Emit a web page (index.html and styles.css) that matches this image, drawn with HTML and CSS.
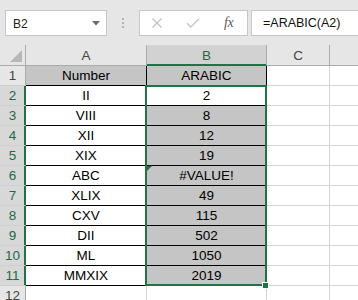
FILE: index.html
```html
<!DOCTYPE html>
<html>
<head>
<meta charset="utf-8">
<link rel="stylesheet" href="styles.css">
</head>
<body>
<div class="app">
  <div class="fbar">
    <div class="namebox"><span>B2</span>
      <svg class="dd" width="8" height="5" viewBox="0 0 8 5"><polygon points="0,0 8,0 4,4.5" fill="#6b6b6b"/></svg>
    </div>
    <div class="dots"><i></i><i></i><i></i></div>
    <div class="iconbox">
      <svg class="ico-x" width="12" height="10" viewBox="0 0 12 10"><path d="M1.5 0.5 L10.5 9.5 M10.5 0.5 L1.5 9.5" stroke="#c3c3c3" stroke-width="1.4" fill="none"/></svg>
      <svg class="ico-ok" width="14" height="10" viewBox="0 0 14 10"><path d="M1 5.2 L4.8 9 L13 0.8" stroke="#c8c8c8" stroke-width="1.5" fill="none"/></svg>
      <span class="fx">fx</span>
    </div>
    <div class="formula">=ARABIC(A2)</div>
  </div>
  <div class="sheet">
    <div class="grid">
      <div class="c hdr corner"><svg width="14" height="14" viewBox="0 0 14 14"><polygon points="13,1 13,13 1,13" fill="#b7b7b7"/></svg></div>
      <div class="c hdr">A</div>
      <div class="c hdr selcol">B</div>
      <div class="c hdr">C</div>
      <div class="c hdr"></div>

      <div class="c rh">1</div>
      <div class="c bk gray">Number</div>
      <div class="c bk gray">ARABIC</div>
      <div class="c"></div><div class="c"></div>

      <div class="c rh selrow">2</div>
      <div class="c bk">II</div>
      <div class="c bk">2</div>
      <div class="c"></div><div class="c"></div>

      <div class="c rh selrow">3</div>
      <div class="c bk">VIII</div>
      <div class="c bk gray">8</div>
      <div class="c"></div><div class="c"></div>

      <div class="c rh selrow">4</div>
      <div class="c bk">XII</div>
      <div class="c bk gray">12</div>
      <div class="c"></div><div class="c"></div>

      <div class="c rh selrow">5</div>
      <div class="c bk">XIX</div>
      <div class="c bk gray">19</div>
      <div class="c"></div><div class="c"></div>

      <div class="c rh selrow">6</div>
      <div class="c bk">ABC</div>
      <div class="c bk gray err">#VALUE!</div>
      <div class="c"></div><div class="c"></div>

      <div class="c rh selrow">7</div>
      <div class="c bk">XLIX</div>
      <div class="c bk gray">49</div>
      <div class="c"></div><div class="c"></div>

      <div class="c rh selrow">8</div>
      <div class="c bk">CXV</div>
      <div class="c bk gray">115</div>
      <div class="c"></div><div class="c"></div>

      <div class="c rh selrow">9</div>
      <div class="c bk">DII</div>
      <div class="c bk gray">502</div>
      <div class="c"></div><div class="c"></div>

      <div class="c rh selrow">10</div>
      <div class="c bk">ML</div>
      <div class="c bk gray">1050</div>
      <div class="c"></div><div class="c"></div>

      <div class="c rh selrow">11</div>
      <div class="c bk">MMXIX</div>
      <div class="c bk gray">2019</div>
      <div class="c"></div><div class="c"></div>

      <div class="c rh">12</div>
      <div class="c"></div>
      <div class="c"></div>
      <div class="c"></div><div class="c"></div>
    </div>
    <div class="selection"></div>
    <div class="handle"></div>
  </div>
</div>
</body>
</html>
```
FILE: styles.css
```css
html, body {
  margin: 0;
  padding: 0;
  background: #ffffff;
  overflow: hidden;
}
.app {
  width: 358px;
  height: 300px;
  overflow: hidden;
  font-family: "Liberation Sans", Arial, sans-serif;
  color: #000;
}
.fbar {
  height: 45px;
  box-sizing: border-box;
  padding: 10px 0 0 5px;
  background: #e6e6e6;
  display: flex;
  align-items: flex-start;
}
.namebox {
  width: 102px;
  height: 26px;
  box-sizing: border-box;
  background: #fff;
  border: 1px solid #c6c6c6;
  display: flex;
  align-items: center;
  justify-content: space-between;
  padding: 1px 6px 0 7px;
  font-size: 12px;
  color: #222;
}
.namebox .dd {
  margin-top: -1px;
}
.dots {
  width: 32px;
  height: 26px;
  display: flex;
  flex-direction: column;
  align-items: center;
  justify-content: center;
  gap: 2px;
}
.dots i {
  display: block;
  width: 2px;
  height: 2px;
  background: #b3b3b3;
}
.iconbox {
  width: 109px;
  height: 26px;
  box-sizing: border-box;
  background: #fff;
  border: 1px solid #c6c6c6;
  display: flex;
  align-items: center;
  padding-left: 11px;
}
.ico-x { margin-right: 23px; }
.ico-ok { margin-right: 24px; margin-top: 0; }
.fx {
  font-family: "Liberation Serif", "Times New Roman", serif;
  font-style: italic;
  font-size: 14px;
  color: #5a5a5a;
  letter-spacing: -0.5px;
}
.formula {
  flex: 1;
  margin-left: 3px;
  margin-right: -2px;
  height: 26px;
  box-sizing: border-box;
  background: #fff;
  border: 1px solid #c6c6c6;
  font-size: 12.5px;
  line-height: 24px;
  padding-left: 11px;
  color: #111;
}
.sheet {
  position: relative;
}
.grid {
  display: grid;
  grid-template-columns: 26px 121px 120px 63px 40px;
  grid-template-rows: 21px repeat(12, 20px);
}
.c {
  box-sizing: border-box;
  border-right: 1px solid #d4d4d4;
  border-bottom: 1px solid #d4d4d4;
  text-align: center;
  font-size: 13.5px;
  line-height: 18px;
  padding-top: 1px;
  white-space: nowrap;
  overflow: hidden;
  background: #fff;
}
.hdr {
  background: #e6e6e6;
  border-right-color: #ababab;
  border-bottom-color: #ababab;
  color: #444;
  padding-top: 2px;
}
.corner {
  position: relative;
  padding: 0;
}
.corner svg {
  position: absolute;
  left: 9px;
  top: 4px;
}
.selcol {
  background: #d2d2d2;
  color: #1e6b41;
  border-bottom-color: #217346;
  box-shadow: inset 0 -1px 0 #217346;
}
.rh {
  background: #e6e6e6;
  border-right-color: #ababab;
  border-bottom-color: #cfcfcf;
  color: #444;
}
.selrow {
  background: #d8d8d8;
  color: #1e6b41;
  border-right-color: #217346;
  box-shadow: inset -1px 0 0 #217346;
}
.bk {
  border-right-color: #000;
  border-bottom-color: #000;
}
.gray {
  background: #c5c5c5;
}
.err {
  position: relative;
}
.err::before {
  content: "";
  position: absolute;
  left: 0;
  top: 0;
  border-top: 5px solid #217346;
  border-right: 5px solid transparent;
}
.selection {
  position: absolute;
  left: 145px;
  top: 40px;
  width: 122px;
  height: 201px;
  box-sizing: border-box;
  border: 2px solid #217346;
  pointer-events: none;
}
.handle {
  position: absolute;
  left: 262px;
  top: 237px;
  width: 7px;
  height: 7px;
  box-sizing: border-box;
  background: #217346;
  border: 1px solid #fff;
}
```
